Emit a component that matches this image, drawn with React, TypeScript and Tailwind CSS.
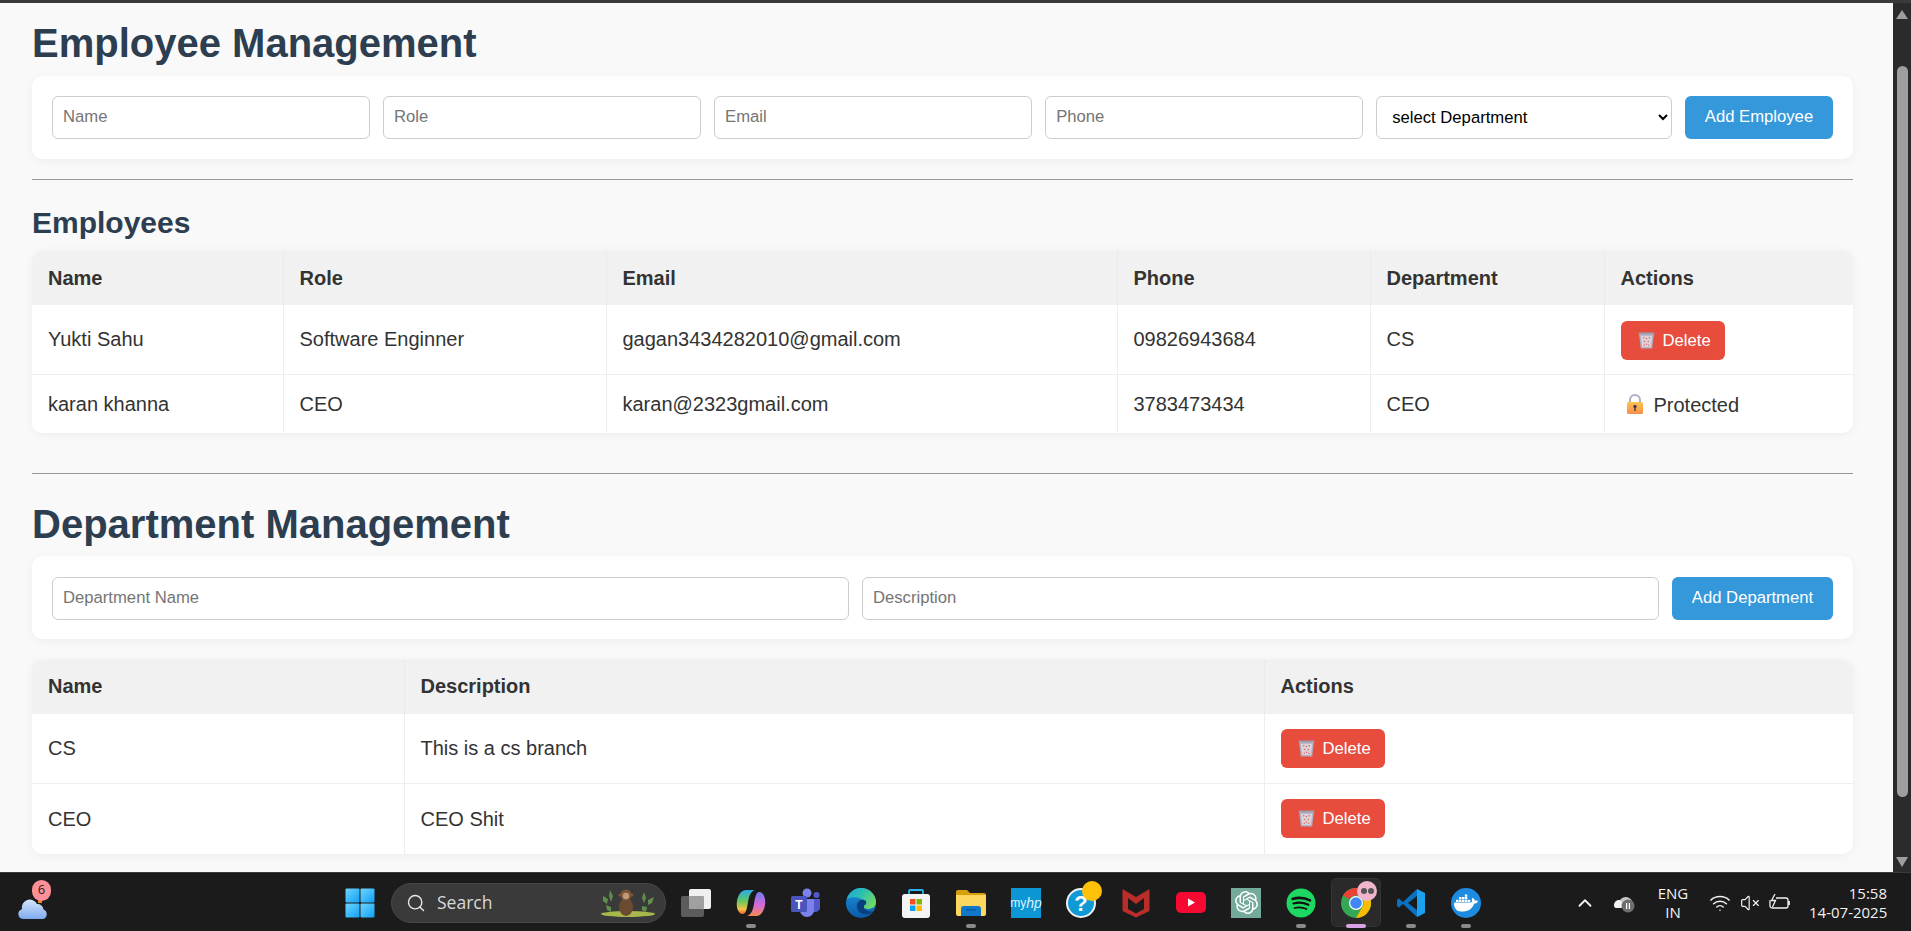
import React from "react";
import { ChevronUp, Search, VolumeX, Wifi } from "lucide-react";
import { SiDocker, SiOpenai } from "react-icons/si";

const TrashIcon = () => (
  <svg width="17" height="17" viewBox="0 0 18 18" className="shrink-0">
    <path d="M1 1h16l-2 16.500H3z" fill="#b0b0c2" />
    <path d="M3 4h12l-1.400 12H4.400z" fill="#d9d4dc" />
    <g fill="#e0605c">
      <circle cx="6" cy="6" r="0.8" />
      <circle cx="9" cy="7" r="0.8" />
      <circle cx="12" cy="6" r="0.8" />
      <circle cx="7" cy="10" r="0.8" />
      <circle cx="11" cy="10" r="0.8" />
      <circle cx="9" cy="13" r="0.8" />
      <circle cx="6.600" cy="14" r="0.7" />
      <circle cx="11.400" cy="14" r="0.7" />
    </g>
    <rect x="0.5" y="0.5" width="17" height="2" rx="0.8" fill="#9d9db0" />
  </svg>
);

const LockIcon = () => (
  <svg width="18" height="21" viewBox="0 0 18 21" className="shrink-0">
    <defs>
      <linearGradient id="lockBody" x1="0" y1="0" x2="0" y2="1">
        <stop offset="0" stopColor="#fcc54e" />
        <stop offset="1" stopColor="#f78c4c" />
      </linearGradient>
    </defs>
    <path d="M4 9V6a5 5 0 0 1 10 0v3" fill="none" stroke="#b5adc4" strokeWidth="2" />
    <rect x="1" y="8" width="16" height="12" rx="1.5" fill="url(#lockBody)" />
    <circle cx="9" cy="12.5" r="1.7" fill="#3f3a50" />
    <rect x="8.3" y="13" width="1.4" height="4" fill="#3f3a50" />
  </svg>
);

const DeleteButton = () => (
  <button className="flex h-[39px] w-[104px] items-center gap-[8px] rounded-[6px] bg-[#e74c3c] pl-[17px] text-[16.67px] text-white">
    <TrashIcon />
    <span>Delete</span>
  </button>
);

const inputClass =
  "h-[43px] min-w-0 flex-1 rounded-[6px] border border-[#ccc] bg-white px-[10px] pb-[1px] text-[16.67px] placeholder:text-[#757575]";

const thClass = "border-r border-[#eaeaea] px-[16px] pb-[1px] text-left text-[20px] font-bold last:border-r-0";
const deptThClass = "border-r border-[#eaeaea] px-[16px] pb-[3px] text-left text-[20px] font-bold last:border-r-0";
const tdClass = "border-r border-[#eee] px-[16px] last:border-r-0";

const employees = [
  { name: "Yukti Sahu", role: "Software Enginner", email: "gagan3434282010@gmail.com", phone: "09826943684", dept: "CS" },
  { name: "karan khanna", role: "CEO", email: "karan@2323gmail.com", phone: "3783473434", dept: "CEO" },
];

const departments = [
  { name: "CS", description: "This is a cs branch" },
  { name: "CEO", description: "CEO Shit" },
];

const Dot = () => <div className="absolute bottom-[-10px] left-[10px] h-[4px] w-[10px] rounded-full bg-[#8a8a8a]" />;

const WindowsLogo = () => (
  <svg width="30" height="30" viewBox="0 0 30 30">
    <defs>
      <linearGradient id="winA" x1="0" y1="0" x2="1" y2="1">
        <stop offset="0" stopColor="#6fd6fb" />
        <stop offset="1" stopColor="#10a0f8" />
      </linearGradient>
    </defs>
    <rect x="0.5" y="0.5" width="14" height="14" rx="1" fill="url(#winA)" />
    <rect x="15.5" y="0.5" width="14" height="14" rx="1" fill="url(#winA)" />
    <rect x="0.5" y="15.5" width="14" height="14" rx="1" fill="url(#winA)" />
    <rect x="15.5" y="15.5" width="14" height="14" rx="1" fill="url(#winA)" />
  </svg>
);

const TaskView = () => (
  <svg width="30" height="30" viewBox="0 0 30 30">
    <rect x="0" y="8" width="23" height="21" rx="2" fill="#5c5c5c" />
    <rect x="8" y="1" width="22" height="20" rx="2" fill="#f0f0f0" />
    <rect x="8" y="8" width="15" height="13" rx="1" fill="#a0a0a0" />
  </svg>
);

const Copilot = () => (
  <svg width="30" height="30" viewBox="0 0 30 30">
    <defs>
      <linearGradient id="copA" x1="0" y1="0" x2="0" y2="1">
        <stop offset="0" stopColor="#2aa8e8" />
        <stop offset="0.45" stopColor="#62c860" />
        <stop offset="0.8" stopColor="#f5c243" />
        <stop offset="1" stopColor="#ee5a3a" />
      </linearGradient>
      <linearGradient id="copB" x1="0" y1="0" x2="0" y2="1">
        <stop offset="0" stopColor="#f48a50" />
        <stop offset="0.45" stopColor="#d868d8" />
        <stop offset="1" stopColor="#6f7cf0" />
      </linearGradient>
    </defs>
    <path d="M10 2H19C15 3 13 8 12 14C11 20 10 27 6 26C2 25 0 19 1 13C2 7 5 2 10 2z" fill="url(#copA)" />
    <path d="M10 2H19C15 3 13 8 12 14C11 20 10 27 6 26C2 25 0 19 1 13C2 7 5 2 10 2z" fill="url(#copB)" transform="rotate(180 15 15)" />
  </svg>
);

const Teams = () => (
  <svg width="30" height="30" viewBox="0 0 30 30">
    <circle cx="16" cy="5" r="4.5" fill="#7b83eb" />
    <circle cx="25.5" cy="7" r="3" fill="#5059c9" />
    <path d="M21 11h8v9a5 5 0 0 1-8 3z" fill="#5059c9" />
    <path d="M9 11h14v11a7 7 0 0 1-14 0z" fill="#7b83eb" />
    <rect x="0" y="8" width="16" height="16" rx="1.5" fill="#4b53bc" />
    <text x="8" y="20.5" textAnchor="middle" fontSize="12" fontWeight="700" fill="#fff" fontFamily="'Liberation Sans', sans-serif">T</text>
  </svg>
);

const Edge = () => (
  <svg width="30" height="30" viewBox="0 0 30 30">
    <defs>
      <linearGradient id="edgeA" x1="0" y1="0" x2="1" y2="0.6">
        <stop offset="0" stopColor="#1fa6d6" />
        <stop offset="0.5" stopColor="#2cc0b0" />
        <stop offset="1" stopColor="#6ed868" />
      </linearGradient>
      <linearGradient id="edgeB" x1="0" y1="0" x2="0" y2="1">
        <stop offset="0" stopColor="#1b94de" />
        <stop offset="1" stopColor="#0c5aa8" />
      </linearGradient>
    </defs>
    <circle cx="15" cy="15" r="15" fill="url(#edgeB)" />
    <path d="M1 11C3 4 9 0 15 0C24 0 30 7 30 14C30 19 26 21 22 21C19 21 17 20 17 18C20 17 21 15 19 13C14 9 6 8 1 11z" fill="url(#edgeA)" />
    <path d="M11 20C10 14 14 11 18 12C21 13 21 16 18 17.500C17 21 21 24 27 23.500C22 28.500 13 27 11 20z" fill="#0a3f7e" />
  </svg>
);

const Store = () => (
  <svg width="30" height="30" viewBox="0 0 30 30">
    <path d="M8 7V3a1 1 0 0 1 1-1h12a1 1 0 0 1 1 1v4" fill="none" stroke="#28b4f0" strokeWidth="1.8" />
    <rect x="1" y="6" width="28" height="24" rx="3" fill="#f4f4f4" />
    <rect x="9" y="11" width="5.5" height="5.5" fill="#f25022" />
    <rect x="15.5" y="11" width="5.5" height="5.5" fill="#7fba00" />
    <rect x="9" y="17.5" width="5.5" height="5.5" fill="#00a4ef" />
    <rect x="15.5" y="17.5" width="5.5" height="5.5" fill="#ffb900" />
  </svg>
);

const Explorer = () => (
  <svg width="30" height="30" viewBox="0 0 30 30">
    <path d="M0 4a2 2 0 0 1 2-2h9l3 3h14a2 2 0 0 1 2 2v3H0z" fill="#d69f0d" />
    <path d="M0 7h30v19a2 2 0 0 1-2 2H2a2 2 0 0 1-2-2z" fill="#fdd75e" />
    <path d="M5 21a3 3 0 0 1 3-3h14a3 3 0 0 1 3 3v7H5z" fill="#1277c9" />
    <rect x="10" y="21" width="10" height="1.5" fill="#0b5da3" />
  </svg>
);

const MyHp = () => (
  <div className="flex h-[30px] w-[30px] items-center justify-center bg-[#0d96d4] text-[12px] leading-none text-[#dff3fb] [font-family:'Liberation_Sans',sans-serif]">
    <span>my</span>
    <span className="text-[14px] italic">hp</span>
  </div>
);

const Help = () => (
  <svg width="30" height="30" viewBox="0 0 30 30">
    <circle cx="15" cy="15" r="14" fill="#0f9ad6" stroke="#f2f2f2" strokeWidth="2" />
    <text x="15" y="23" textAnchor="middle" fontSize="22" fontWeight="700" fill="#fff" fontFamily="'Liberation Sans', sans-serif">?</text>
  </svg>
);

const McAfee = () => (
  <svg width="30" height="30" viewBox="0 0 30 30">
    <path
      fillRule="evenodd"
      d="M1.500 1L15 9L28.500 1V23L15 29.500L1.500 23zM7 10V21L15 25.500L23 21V10L15 16z"
      fill="#b92d2a"
    />
  </svg>
);

const YouTube = () => (
  <svg width="30" height="30" viewBox="0 0 30 30">
    <rect x="0" y="4" width="30" height="21" rx="5" fill="#f60a32" />
    <path d="M12 10.5l7 4-7 4z" fill="#fff" />
  </svg>
);

const ChatGpt = () => (
  <div className="flex h-[30px] w-[30px] items-center justify-center bg-[#74aa9c] text-white">
    <SiOpenai size={23} />
  </div>
);

const Spotify = () => (
  <svg width="30" height="30" viewBox="0 0 30 30">
    <circle cx="15" cy="15" r="14.5" fill="#1ed760" />
    <g fill="none" stroke="#111" strokeLinecap="round">
      <path d="M6.5 11c6-1.8 12-1.3 17.5 1.4" strokeWidth="2.6" />
      <path d="M7.5 15.5c5-1.4 10-1 14.8 1.3" strokeWidth="2.2" />
      <path d="M8.5 20c4-1 8-.8 12 1" strokeWidth="1.8" />
    </g>
  </svg>
);

const Chrome = () => (
  <svg width="30" height="30" viewBox="0 0 30 30">
    <circle cx="15" cy="15" r="15" fill="#34a853" />
    <path d="M15 0a15 15 0 0 1 13 7.5H15a7.5 7.5 0 0 0-6.500 3.750L2 7.500A15 15 0 0 1 15 0z" fill="#ea4335" />
    <path d="M28 7.500A15 15 0 0 1 15 30l6.500-11.250A7.500 7.500 0 0 0 21.500 11.250z" fill="#fbbc05" />
    <circle cx="15" cy="15" r="7" fill="#fff" />
    <circle cx="15" cy="15" r="5.800" fill="#4285f4" />
  </svg>
);

const VsCode = () => (
  <svg width="30" height="30" viewBox="0 0 30 30">
    <path d="M21 1L7 14L3 10.500L1 12V18L3 19.500L7 16L21 29V22L12 15L21 8z" fill="#0a70c0" />
    <path d="M21 1L29 5V25L21 29z" fill="#1ba1f2" />
  </svg>
);

const Docker = () => (
  <div className="flex h-[30px] w-[30px] items-center justify-center rounded-full bg-[#1d8ce0] text-white">
    <SiDocker size={24} />
  </div>
);

const Monkey = () => (
  <svg width="58" height="30" viewBox="0 0 58 30">
    <ellipse cx="30" cy="26" rx="27" ry="3" fill="#a8b84a" />
    <g fill="#5f8f4a">
      <path d="M5 8l5 3-1 5-4-3z" />
      <path d="M8 17l5 2 0 5-4-2z" />
      <path d="M12 2l3 6-2 6-2-6z" />
      <path d="M46 4l2 6-2 5-2-5z" />
      <path d="M50 12l6-3-2 6-4 2z" />
      <path d="M44 18l5 1-1 5-4-2z" />
    </g>
    <ellipse cx="28" cy="19" rx="7" ry="9" fill="#6b4a32" />
    <circle cx="28" cy="7" r="5.500" fill="#7a5638" />
    <circle cx="28" cy="8" r="3.200" fill="#c39a78" />
    <circle cx="22" cy="7" r="1.500" fill="#7a5638" />
    <circle cx="34" cy="7" r="1.500" fill="#7a5638" />
  </svg>
);

const Weather = () => (
  <div className="relative h-[30px] w-[30px]">
    <svg width="30" height="30" viewBox="0 0 30 30" className="absolute left-0 top-[3px]">
      <defs>
        <linearGradient id="cloud" x1="0" y1="0" x2="0" y2="1">
          <stop offset="0" stopColor="#d6e6fb" />
          <stop offset="1" stopColor="#7eaaf0" />
        </linearGradient>
      </defs>
      <rect x="20" y="6" width="4" height="6" fill="#f08030" />
      <path d="M5 28a5 5 0 0 1-1-9.800A8 8 0 0 1 19 13a6 6 0 0 1 6.500 5.500A5 5 0 0 1 25 28z" fill="url(#cloud)" />
    </svg>
    <div className="absolute left-[14px] top-[-8px] flex h-[21px] w-[19px] items-center justify-center rounded-full bg-[#ff8f96] text-[13px] text-[#222]">
      6
    </div>
  </div>
);

const OneDrive = () => (
  <svg width="22" height="20" viewBox="0 0 22 20">
    <path d="M1 12a6 6 0 0 1 6-5 7 7 0 0 1 12 1 4 4 0 0 1-1 7H3a3 3 0 0 1-2-3z" fill="#c8c8c8" />
    <path d="M1 12a6 6 0 0 1 6-5l5 8H3a3 3 0 0 1-2-3z" fill="#f2f2f2" />
    <circle cx="15" cy="13" r="6.500" fill="#6e6e6e" />
    <rect x="13" y="10" width="1.200" height="6" fill="#fff" />
    <rect x="15.800" y="10" width="1.200" height="6" fill="#fff" />
  </svg>
);

const Battery = () => (
  <svg width="22" height="20" viewBox="0 0 22 20" fill="none" stroke="#f2f2f2" strokeWidth="1.300">
    <path d="M7 5h10a2 2 0 0 1 2 2v6a2 2 0 0 1-2 2H3a2 2 0 0 1-2-2V7" />
    <path d="M20 8v4" strokeWidth="1.800" />
    <path d="M6 1L2.500 7.500h4L3.500 14" fill="none" />
  </svg>
);

const TaskIcon = ({ children, dot }: { children: React.ReactNode; dot?: boolean }) => (
  <div className="relative h-[30px] w-[30px] shrink-0">
    {children}
    {dot && <Dot />}
  </div>
);

const Taskbar = () => (
  <div className="flex h-[59px] shrink-0 items-center border-t border-[#3a3a3a] bg-[#1b1b1b] pt-[1px] text-[#f2f2f2] [font-family:'Open_Sans',sans-serif]">
    <div className="ml-[18px]">
      <Weather />
    </div>
    <div className="ml-[297px]">
      <WindowsLogo />
    </div>
    <div className="ml-[16px] flex h-[40px] w-[275px] items-center rounded-full border border-[#474747] bg-[#3a3a3a] pl-[14px] pr-[9px] text-[17.5px] text-[#d8d8d8]">
      <Search size={20} strokeWidth={1.7} className="text-[#e8e8e8]" />
      <span className="ml-[11px]">Search</span>
      <div className="ml-auto">
        <Monkey />
      </div>
    </div>
    <div className="ml-[15px] flex gap-[25px]">
      <TaskIcon>
        <TaskView />
      </TaskIcon>
      <TaskIcon dot>
        <Copilot />
      </TaskIcon>
      <TaskIcon>
        <Teams />
      </TaskIcon>
      <TaskIcon>
        <Edge />
      </TaskIcon>
      <TaskIcon>
        <Store />
      </TaskIcon>
      <TaskIcon dot>
        <Explorer />
      </TaskIcon>
      <TaskIcon>
        <MyHp />
      </TaskIcon>
      <TaskIcon>
        <Help />
        <div className="absolute left-[16px] top-[-7px] h-[20px] w-[20px] rounded-full bg-[#ffc107]" />
      </TaskIcon>
      <TaskIcon>
        <McAfee />
      </TaskIcon>
      <TaskIcon>
        <YouTube />
      </TaskIcon>
      <TaskIcon>
        <ChatGpt />
      </TaskIcon>
      <TaskIcon dot>
        <Spotify />
      </TaskIcon>
      <TaskIcon>
        <div className="absolute left-[-10px] top-[-10px] h-[49px] w-[50px] rounded-[5px] border border-[#333] bg-[#2a2a2a]" />
        <div className="relative">
          <Chrome />
        </div>
        <div className="absolute left-[16px] top-[-7px] flex h-[20px] w-[20px] items-center justify-center gap-[1px] rounded-full bg-[#f0b4cc]">
          <span className="h-[6px] w-[6px] rounded-full bg-[#555]" />
          <span className="h-[6px] w-[6px] rounded-full bg-[#555]" />
        </div>
        <div className="absolute bottom-[-10px] left-[5px] h-[4px] w-[20px] rounded-full bg-[#d9a2e2]" />
      </TaskIcon>
      <TaskIcon dot>
        <VsCode />
      </TaskIcon>
      <TaskIcon dot>
        <Docker />
      </TaskIcon>
    </div>
    <ChevronUp size={22} strokeWidth={2} className="ml-[93px] shrink-0 text-[#f2f2f2]" />
    <div className="ml-[17px] shrink-0">
      <OneDrive />
    </div>
    <div className="ml-[20px] w-[36px] shrink-0 text-center text-[15px] leading-[19px]">
      <div>ENG</div>
      <div>IN</div>
    </div>
    <Wifi size={22} strokeWidth={1.6} className="ml-[18px] shrink-0" />
    <VolumeX size={20} strokeWidth={1.4} className="ml-[9px] shrink-0" />
    <div className="ml-[9px] shrink-0">
      <Battery />
    </div>
    <div className="ml-[18px] w-[78px] shrink-0 whitespace-nowrap text-right text-[15px] leading-[19px]">
      <div>15:58</div>
      <div>14-07-2025</div>
    </div>
  </div>
);

const Scrollbar = () => (
  <div className="flex w-[18px] shrink-0 flex-col items-center bg-[#2b2b2b]">
    <div className="mt-[7px] h-0 w-0 border-x-[6px] border-b-[9px] border-x-transparent border-b-[#9e9e9e]" />
    <div className="mt-[47px] h-[731px] w-[11px] rounded-full bg-[#9e9e9e]" />
    <div className="mt-[60px] h-0 w-0 border-x-[6px] border-t-[10px] border-x-transparent border-t-[#9e9e9e]" />
  </div>
);

export default function App() {
  return (
    <div className="flex h-screen flex-col overflow-hidden bg-[#f9f9f9] [font-family:'Liberation_Sans',Arial,sans-serif]">
      <div className="h-[3px] shrink-0 bg-[#3a3a3a]" />
      <div className="flex min-h-0 flex-1">
        <main className="min-w-0 flex-1 overflow-hidden pl-[32px] pr-[40px] text-[#333]">
          <h1 className="mt-[17px] h-[56px] text-[40px] font-bold leading-[46px] text-[#2c3e50]">Employee Management</h1>

          <div className="flex h-[83px] items-center gap-[12.8px] rounded-[10px] bg-white px-[20px] shadow-[0_2px_10px_rgba(0,0,0,0.05)]">
            <input className={inputClass} placeholder="Name" />
            <input className={inputClass} placeholder="Role" />
            <input className={inputClass} placeholder="Email" />
            <input className={inputClass} placeholder="Phone" />
            <select className="h-[43px] w-[296px] shrink-0 rounded-[6px] border border-[#ccc] bg-white px-[11px] text-[16.67px] text-black">
              <option>select Department</option>
            </select>
            <button className="h-[43px] w-[148px] shrink-0 rounded-[6px] bg-[#3498db] pb-[2px] text-[16.67px] text-white">
              Add Employee
            </button>
          </div>

          <hr className="mt-[20px] border-[#999]" />

          <h2 className="mt-[26px] h-[44px] text-[30px] font-bold leading-[34px] text-[#2c3e50]">Employees</h2>

          <div className="overflow-hidden rounded-[10px] border-t border-[#f4f4f4] bg-white shadow-[0_2px_10px_rgba(0,0,0,0.05)]">
            <table className="w-full table-fixed border-collapse text-[20px]">
              <colgroup>
                <col className="w-[251px]" />
                <col className="w-[323px]" />
                <col className="w-[511px]" />
                <col className="w-[253px]" />
                <col className="w-[234px]" />
                <col />
              </colgroup>
              <thead>
                <tr className="h-[54px] bg-[#f1f1f1]">
                  <th className={thClass}>Name</th>
                  <th className={thClass}>Role</th>
                  <th className={thClass}>Email</th>
                  <th className={thClass}>Phone</th>
                  <th className={thClass}>Department</th>
                  <th className={thClass}>Actions</th>
                </tr>
              </thead>
              <tbody>
                <tr className="h-[69px] border-b border-[#eee]">
                  <td className={tdClass}>{employees[0].name}</td>
                  <td className={tdClass}>{employees[0].role}</td>
                  <td className={tdClass}>{employees[0].email}</td>
                  <td className={tdClass}>{employees[0].phone}</td>
                  <td className={tdClass}>{employees[0].dept}</td>
                  <td className={`${tdClass} pt-[2px]`}>
                    <DeleteButton />
                  </td>
                </tr>
                <tr className="h-[59px]">
                  <td className={tdClass}>{employees[1].name}</td>
                  <td className={tdClass}>{employees[1].role}</td>
                  <td className={tdClass}>{employees[1].email}</td>
                  <td className={tdClass}>{employees[1].phone}</td>
                  <td className={tdClass}>{employees[1].dept}</td>
                  <td className={tdClass}>
                    <div className="flex items-center gap-[10px] pl-[5px] pt-[2px]">
                      <LockIcon />
                      <span>Protected</span>
                    </div>
                  </td>
                </tr>
              </tbody>
            </table>
          </div>

          <hr className="mt-[40px] border-[#999]" />

          <h1 className="mt-[27px] h-[55px] text-[40px] font-bold leading-[46px] text-[#2c3e50]">Department Management</h1>

          <div className="flex h-[83px] items-center gap-[12.8px] rounded-[10px] bg-white px-[20px] pt-[2px] shadow-[0_2px_10px_rgba(0,0,0,0.05)]">
            <input className={inputClass} placeholder="Department Name" />
            <input className={inputClass} placeholder="Description" />
            <button className="h-[43px] w-[161px] shrink-0 rounded-[6px] bg-[#3498db] pb-[2px] text-[16.67px] text-white">
              Add Department
            </button>
          </div>

          <div className="mt-[20px] overflow-hidden rounded-[10px] border-t border-[#f4f4f4] bg-white shadow-[0_2px_10px_rgba(0,0,0,0.05)]">
            <table className="w-full table-fixed border-collapse text-[20px]">
              <colgroup>
                <col className="w-[372px]" />
                <col className="w-[860px]" />
                <col />
              </colgroup>
              <thead>
                <tr className="h-[54px] bg-[#f1f1f1]">
                  <th className={deptThClass}>Name</th>
                  <th className={deptThClass}>Description</th>
                  <th className={deptThClass}>Actions</th>
                </tr>
              </thead>
              <tbody>
                {departments.map((d, i) => (
                  <tr key={d.name} className={i === 0 ? "h-[69px] border-b border-[#eee]" : "h-[71px]"}>
                    <td className={tdClass}>{d.name}</td>
                    <td className={tdClass}>{d.description}</td>
                    <td className={tdClass}>
                      <DeleteButton />
                    </td>
                  </tr>
                ))}
              </tbody>
            </table>
          </div>
        </main>
        <Scrollbar />
      </div>
      <Taskbar />
    </div>
  );
}
